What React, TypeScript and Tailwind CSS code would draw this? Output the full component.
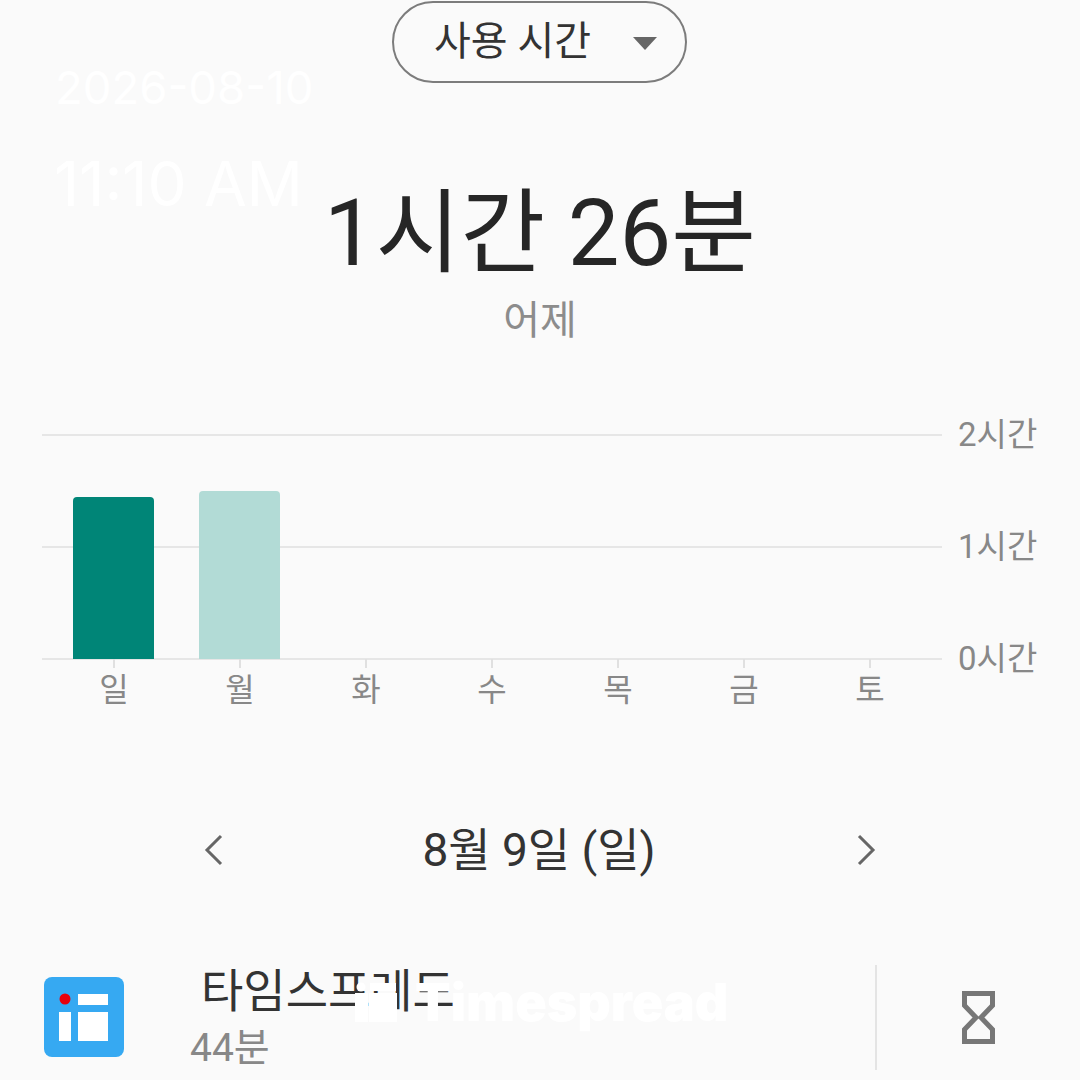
import React from 'react';

const days = [
  { label: '일', height: 'h-[162px]', color: 'bg-[#008577]' },
  { label: '월', height: 'h-[168px]', color: 'bg-[#b2dbd6]' },
  { label: '화' },
  { label: '수' },
  { label: '목' },
  { label: '금' },
  { label: '토' },
];

const fontStack = "font-['Roboto','Noto_Sans_CJK_KR',sans-serif]";

function AppIcon() {
  return (
    <svg width="80" height="80" viewBox="0 0 80 80" className="shrink-0">
      <rect width="80" height="80" rx="8" fill="#36a9f2" />
      <rect x="15" y="35" width="12" height="29" fill="#fff" />
      <rect x="34" y="17" width="30" height="11" fill="#fff" />
      <rect x="34" y="35" width="30" height="29" fill="#fff" />
      <circle cx="21" cy="22" r="5.5" fill="#e8000b" />
    </svg>
  );
}

function Hourglass() {
  return (
    <svg width="33" height="53" viewBox="0 0 33 53" fill="none" stroke="#777" strokeWidth="5">
      <path d="M2.5 2.5H30.500V14.500L19 26.500L30.500 38.500V50.500H2.500V38.500L14 26.500L2.500 14.500Z" strokeLinejoin="miter" />
    </svg>
  );
}

export default function App() {
  return (
    <div className={`relative w-[1080px] h-[1080px] overflow-hidden bg-[#fafafa] ${fontStack}`}>
      <div className="flex justify-center pt-px">
        <div className="flex items-center w-[295px] h-[82px] ml-[-1px] pl-[40px] border-2 border-[#7c7c7c] rounded-[41px]">
          <span className="text-[40px] leading-none text-[#333]">사용 시간</span>
          <span className="ml-[42px] mt-0.5 w-0 h-0 border-x-[12px] border-x-transparent border-t-[13px] border-t-[#666]" />
        </div>
      </div>

      <div className="mt-[94px] text-center text-[92px] leading-[114px] text-[#262626]">1시간 26분</div>
      <div className="text-center text-[40px] leading-[60px] text-[#8c8c8c]">어제</div>

      <div className="relative mt-[83px] ml-[42px] h-[300px]">
        <div className="absolute left-0 top-0 w-[900px] h-[226px] flex flex-col justify-between">
          <div className="h-[2px] bg-[#e6e6e6]" />
          <div className="h-[2px] bg-[#e6e6e6]" />
          <div className="h-[2px] bg-[#e6e6e6]" />
        </div>
        <div className="absolute left-[916px] top-[-22px] h-[270px] flex flex-col justify-between text-[33px] leading-[46px] text-[#888]">
          <span>2시간</span>
          <span>1시간</span>
          <span>0시간</span>
        </div>
        <div className="relative grid grid-cols-7 w-[900px] px-[9px]">
          {days.map((d) => (
            <div key={d.label} className="flex flex-col items-center">
              <div className="flex items-end h-[225px] -ml-[2px]">
                {d.height && <div className={`w-[81px] rounded-t-[4px] ${d.height} ${d.color}`} />}
              </div>
              <div className="w-[2px] h-[9px] bg-[#e0e0e0]" />
              <span className="text-[32px] leading-[44px] text-[#888]">{d.label}</span>
            </div>
          ))}
        </div>
      </div>

      <div className="flex items-center justify-between h-[60px] mt-[86px] pl-[204px] pr-[204px]">
        <svg width="20" height="32" viewBox="0 0 20 32" fill="none" stroke="#666" strokeWidth="3">
          <path d="M17 2L3 16L17 30" />
        </svg>
        <span className="text-[46px] leading-none text-[#333] -ml-[2px]">8월 9일 (일)</span>
        <svg width="20" height="32" viewBox="0 0 20 32" fill="none" stroke="#666" strokeWidth="3">
          <path d="M3 2L17 16L3 30" />
        </svg>
      </div>

      <div className="flex items-center pl-[44px] mt-[81px]">
        <AppIcon />
        <div className="ml-[66px] w-[685px] flex flex-col">
          <span className="ml-[11px] text-[46px] leading-[60px] text-[#333]">타임스프레드</span>
          <span className="mt-[2px] text-[39px] leading-[50px] text-[#888]">44분</span>
        </div>
        <div className="w-[2px] h-[105px] bg-[#e4e4e4]" />
        <div className="ml-[85px]">
          <Hourglass />
        </div>
      </div>

      {/* watermark layer */}
      <div className="absolute left-[55px] top-[60px] text-[45.500px] leading-[56px] text-white font-['Inter',sans-serif] font-normal">2026-08-10</div>
      <div className="absolute left-[54px] top-[148px] text-[62px] leading-[72px] text-white font-['Inter',sans-serif] font-normal">11:10 AM</div>
      <div className="absolute left-[355px] top-[973px] flex items-center gap-[18px] text-white">
        <svg width="42" height="40" viewBox="0 0 42 40" fill="#fff" className="mb-[2px]">
          <rect x="0" y="11" width="13" height="29" />
          <rect x="15" y="1" width="26" height="8" />
          <rect x="14" y="11" width="28" height="29" />
          <circle cx="6" cy="5" r="4.5" />
        </svg>
        <span className="text-[52px] leading-[60px] font-black font-['Inter',sans-serif]">Timespread</span>
      </div>
    </div>
  );
}
